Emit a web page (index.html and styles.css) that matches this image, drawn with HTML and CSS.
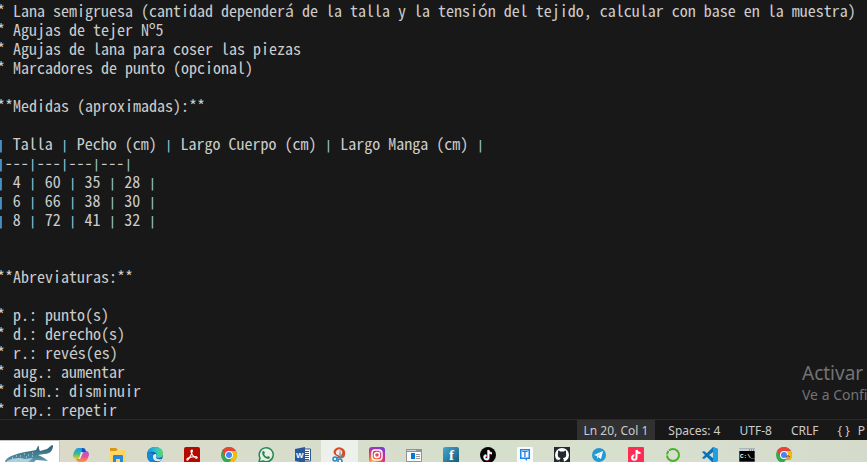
FILE: index.html
```html
<!DOCTYPE html>
<html lang="es">
<head>
<meta charset="utf-8">
<title>Editor</title>
<link rel="stylesheet" href="styles.css">
</head>
<body>
<main class="editor">
<pre class="code">* Lana semigruesa (cantidad dependerá de la talla y la tensión del tejido, calcular con base en la muestra)
* Agujas de tejer Nº5
* Agujas de lana para coser las piezas
* Marcadores de punto (opcional)

**Medidas (aproximadas):**

<i>|</i> Talla <i>|</i> Pecho (cm) <i>|</i> Largo Cuerpo (cm) <i>|</i> Largo Manga (cm) <i>|</i>
<i>|</i>---<i>|</i>---<i>|</i>---<i>|</i>---<i>|</i>
<i>|</i> 4 <i>|</i> 60 <i>|</i> 35 <i>|</i> 28 <i>|</i>
<i>|</i> 6 <i>|</i> 66 <i>|</i> 38 <i>|</i> 30 <i>|</i>
<i>|</i> 8 <i>|</i> 72 <i>|</i> 41 <i>|</i> 32 <i>|</i>


**Abreviaturas:**

* p.: punto(s)
* d.: derecho(s)
* r.: revés(es)
* aug.: aumentar
* dism.: disminuir
* rep.: repetir</pre>
<aside class="watermark"><p class="mark-title">Activar</p><p class="mark-text">Ve a Confi</p></aside>
</main>
<footer class="status">
<button class="item current">Ln 20, Col 1</button>
<button class="item">Spaces: 4</button>
<button class="item">UTF-8</button>
<button class="item">CRLF</button>
<button class="item language"><span>{ }</span><span>P</span></button>
</footer>
<nav class="taskbar">
<button class="search">
<svg width="59" height="30" viewBox="0 0 59 30"><defs><linearGradient id="sk" x2="0" y2="1"><stop offset="0" stop-color="#28616f"/><stop offset=".6" stop-color="#4f8ba1"/><stop offset="1" stop-color="#9cc0cd"/></linearGradient></defs><path d="M5 20C8 15 16 13 25 11C29 10 33 10 36 9L38 5Q39 4 39 8L40 10L47 8L52 4Q54 4 52 9Q50 13 44 13L38 14Q45 17 48 20L36 19L30 26H5Z" fill="url(#sk)"/><path d="M7 20Q16 15 25 18L33 17L26 23H7Z" fill="#acd0df"/><path d="M12 17h1m3-2h1m3 0h1m3-2h1m3 1h1m3-2h1M20 18h1m5-2h1m5-1h1" stroke="#c9e3e8"/></svg>
</button>
<button class="app"><svg viewBox="0 0 16 16"><defs><linearGradient id="ca" x2="0" y2="1"><stop stop-color="#169cec"/><stop offset=".5" stop-color="#38b991"/><stop offset="1" stop-color="#ecd022"/></linearGradient><linearGradient id="cb" x2="0" y2="1"><stop stop-color="#a553eb"/><stop offset=".55" stop-color="#ef5288"/><stop offset="1" stop-color="#ff9c3d"/></linearGradient></defs><path d="M5 1h5q2 0 2.500 2l.5 2H9L6.500 12H3Q0 12 0 8Q2 1 5 1Z" fill="url(#ca)"/><path d="M11 4h2q3 0 3 4q-2 7-5 7H6q-2 0-3-3h4z" fill="url(#cb)"/><path d="M9 1q3 0 3.500 2l.5 2H10Q9 5 8 8z" fill="#174fc5"/><path d="M9.500 5L7 12H6l2-7Z" fill="#e9f0f5"/></svg></button>
<button class="app"><svg viewBox="0 0 16 16"><path d="M0 1h6l2 2v3H0z" fill="#d99610"/><path d="M0 4h6l1-1h9v13H0z" fill="#ffd664"/><path d="M3 16V9q0-1 1-1h8q1 0 1 1v7h-3v-4H6v4z" fill="#2689dc"/></svg></button>
<button class="app"><svg viewBox="0 0 16 16"><defs><linearGradient id="eg" x2="1" y2="0"><stop stop-color="#168dd6"/><stop offset=".55" stop-color="#2bc4cb"/><stop offset="1" stop-color="#60d761"/></linearGradient></defs><circle cx="8" cy="8" r="8" fill="#1265b8"/><path d="M0 7Q1 0 8 0q8 0 8 7q0 4-5 4q-2 0-2-1q2-4-2-5Q3 4 0 7Z" fill="url(#eg)"/><path d="M9 7q-4 0-3 4q1 4 7 3l2-2q-6 1-6-2q1-2 0-3" fill="#dceced"/><path d="M6 7q-2 6 4 9H8Q0 16 0 8q2-4 6-1" fill="#148ad5"/></svg></button>
<button class="app"><svg viewBox="0 0 16 16"><rect width="16" height="16" rx="2" fill="#b30b00"/><path d="M8 3q-2 0 0 4q3 5 5 4q1-2-5-1q-6 1-5 3q1 1 4-5q2-5 1-5Z" fill="none" stroke="#fff" stroke-width="1.200"/></svg></button>
<button class="app"><svg viewBox="0 0 16 16"><g id="chrome"><circle cx="8" cy="8" r="8" fill="#35a853"/><path d="M1.100 4A8 8 0 0 1 14.900 4H8A4 4 0 0 0 4.500 10Z" fill="#e94335"/><path d="M14.900 4A8 8 0 0 1 8 16l3.500-6A4 4 0 0 0 8 4Z" fill="#fbbc05"/><circle cx="8" cy="8" r="4" fill="#fff"/><circle cx="8" cy="8" r="3" fill="#4285f4"/></g></svg></button>
<button class="app"><svg viewBox="0 0 16 16"><path d="M1 15l1-4A7 7 0 1 1 5 14Z" fill="#e8eee0" stroke="#238857" stroke-width="1.500"/><path d="M5 4l1 0l1 2l-1 1q1 2 3 3l1-1l2 1q0 2-2 2Q5 11 4 6Z" fill="#238857"/></svg></button>
<button class="app"><svg viewBox="0 0 16 16"><path d="M8 2h7.500v12H8z" fill="#fff" stroke="#2b579a"/><path d="M10 4.500h4m-4 2h4m-4 2h4m-4 2h4m-4 2h4" stroke="#2b579a"/><path d="M0 2l10-2v16L0 14z" fill="#2b579a"/><text x="1" y="11" class="glyph word">W</text></svg></button>
<button class="app active"><svg viewBox="0 0 16 16"><path d="M3 2Q6-1 10 1Q14 3 13 8Q12 12 8 11L3 8Q0 5 3 2Z" fill="#d84a25"/><path d="M5 3Q8 1 10 4Q11 7 8 9L4 7Q3 5 5 3Z" fill="#ecebea"/><path d="M8 1l2 11l-3-4Z" fill="#9fa6aa"/><path d="M12 8l-2 2l-6 1" fill="none" stroke="#6e7d85" stroke-width="1.500"/><circle cx="3" cy="12" r="2" fill="none" stroke="#2a87c6" stroke-width="1.500"/><circle cx="8" cy="14" r="2" fill="none" stroke="#2a87c6" stroke-width="1.500"/></svg></button>
<button class="app"><svg viewBox="0 0 16 16"><defs><radialGradient id="ig" cx=".25" cy="1" r="1.100"><stop stop-color="#ffd75b"/><stop offset=".35" stop-color="#fa6531"/><stop offset=".65" stop-color="#d92e82"/><stop offset="1" stop-color="#743ddb"/></radialGradient></defs><rect width="16" height="16" rx="3" fill="url(#ig)"/><rect x="3" y="3" width="10" height="10" rx="3" fill="none" stroke="#fff" stroke-width="1.400"/><circle cx="8" cy="8" r="2.500" fill="none" stroke="#fff" stroke-width="1.400"/><circle cx="11" cy="5" r=".8" fill="#fff"/></svg></button>
<button class="app"><svg viewBox="0 0 16 16"><path d="M.5 2.500h15v12H.5z" fill="#fafafa" stroke="#8f9499"/><path d="M0 2h16v3H0z" fill="#8f9499"/><path d="M1 3h9v1H1z" fill="#cfd1d2"/><path d="M5 6h4v6H5z" fill="#0078d7"/><path d="M10 7.500h4m-4 2h4m-4 2h4" stroke="#999"/></svg></button>
<button class="app"><svg viewBox="0 0 16 16"><defs><linearGradient id="fb" x2="1" y2="1"><stop stop-color="#46a8cf"/><stop offset="1" stop-color="#165879"/></linearGradient></defs><rect width="16" height="16" rx="2" fill="url(#fb)"/><text x="6" y="13" class="glyph letter-f">f</text></svg></button>
<button class="app"><svg viewBox="0 0 16 16"><circle cx="8" cy="8" r="8" fill="#050505"/><path d="M8 3v7a2 2 0 1 1-2-2M8 3q1 3 4 3" fill="none" stroke="#32dcda" stroke-width="1.800"/><path d="M9 4v7a2 2 0 1 1-2-2M9 4q1 3 3 3" fill="none" stroke="#ed2957" stroke-width="1.600"/><path d="M8.500 3v7.500a2 2 0 1 1-2-2M8.500 3q0 3 3.500 3.500" fill="none" stroke="#fff" stroke-width="1.500"/></svg></button>
<button class="app"><svg viewBox="0 0 16 16"><rect width="16" height="16" rx="1" fill="#f7fbff"/><path d="M3 2h10v10h-3v2l-2-2H3z" fill="#1785f2"/><path d="M4.500 3.500h7v7h-7z" fill="#f7fbff"/><text x="5" y="10" class="glyph letter-t">T</text></svg></button>
<button class="app"><svg viewBox="0 0 16 16"><rect width="16" height="16" fill="#24292e"/><circle cx="8" cy="8" r="7" fill="#fff"/><path d="M4 4q1-1 2 .5h4Q11 3 12 4v2q1 5-3 5q1 1 1 5H6v-2q-2 1-3-2q2 2 3 0q0-1 1-1q-4 0-3-5Z" fill="#24292e"/></svg></button>
<button class="app"><svg viewBox="0 0 16 16"><circle cx="8" cy="8" r="7" fill="#2498d2"/><path d="M3 8l9-4L10 12L7 10L6 12L6 9Z" fill="#fff"/><path d="M6 9l5-4l-4 5z" fill="#b2d6e9"/></svg></button>
<button class="app"><svg viewBox="0 0 16 16"><rect width="16" height="16" rx="1" fill="#fe2b55"/><path d="M8.500 3v7.500a2.200 2.200 0 1 1-2.200-2.200M8.500 3q.5 3 4 3" fill="none" stroke="#fff" stroke-width="2"/></svg></button>
<button class="app"><svg viewBox="0 0 16 16"><circle cx="8" cy="8" r="6" fill="none" stroke="#44b02a" stroke-width="2"/><circle cx="8" cy="8" r="6.500" fill="none" stroke="#75bd54" stroke-dasharray="1 2"/><path d="M3 3l2 2m-4 3h2" stroke="#d8dfcf"/></svg></button>
<button class="app"><svg viewBox="0 0 16 16"><path d="M11 0l5 2v12l-5 2L1 6l-1-1l2-1l9 7V5L2 12L0 11l1-1z" fill="#0873bd"/><path d="M11 0l5 2v12l-5 2z" fill="#209fe4"/></svg></button>
<button class="app"><svg viewBox="0 0 16 16"><path d="M0 2h16v13H0z" fill="#000" stroke="#858c98"/><path d="M0 2h16v2H0z" fill="#c8ced8"/><path d="M10 3h1m1 0h1m1 0h1" stroke="#48576d"/><text x="1" y="11" class="glyph prompt">C:\_</text></svg></button>
<button class="app"><svg viewBox="0 0 16 16"><use href="#chrome"/><circle cx="12" cy="11" r="2" fill="#c69b87"/><path d="M8 16q0-3 4-3t4 3z" fill="#e2dedb"/><path d="M10 10q2-3 4 0" fill="none" stroke="#6c4c40"/></svg></button>
</nav>
</body>
</html>
```
FILE: styles.css
```css
* { box-sizing: border-box; }

body {
  display: flex;
  flex-direction: column;
  height: 100vh;
  margin: 0;
  overflow: hidden;
  background: #181818;
  color: #cccccc;
  font-family: "Noto Sans", sans-serif;
}

button {
  margin: 0;
  padding: 0;
  border: 0;
  background: none;
  color: inherit;
  font: inherit;
  text-align: left;
}

.editor {
  position: relative;
  flex: 1;
  min-height: 0;
  padding-top: 1px;
  overflow: hidden;
}

.code {
  margin: 0 0 0 -3px;
  font-family: "Noto Sans Mono CJK SC", "DejaVu Sans Mono", monospace;
  font-size: 16px;
  line-height: 19px;
}

.code i {
  color: #9cc8e0;
  font-family: "DejaVu Sans Mono", monospace;
  font-size: 13px;
  font-style: normal;
  line-height: 1;
}

.watermark {
  position: absolute;
  right: 0;
  bottom: 14px;
  width: 65px;
  overflow: hidden;
  color: #737373;
  white-space: nowrap;
}

.watermark p { margin: 0; }

.mark-title {
  font-size: 19px;
  line-height: 24px;
}

.mark-text {
  font-size: 14px;
  line-height: 20px;
}

.status {
  display: flex;
  flex: none;
  justify-content: flex-end;
  height: 21px;
  border-top: 1px solid #2b2b2b;
  overflow: hidden;
  font-size: 12px;
  line-height: 22px;
  white-space: nowrap;
}

.item {
  flex: none;
  height: 22px;
  padding: 0 10px 0 9px;
}

.current {
  margin-right: 4px;
  padding: 0 7px;
  background: #313131;
}

.language {
  display: flex;
  gap: 8px;
  padding-right: 2px;
}

.taskbar {
  display: flex;
  flex: none;
  align-items: flex-start;
  height: 22px;
  overflow: hidden;
  background: linear-gradient(90deg, #dcd9c8, #d9dccb 25%, #d6dfcb 50%, #d8dfce 75%, #d5dbca);
}

.search {
  flex: none;
  width: 60px;
  height: 30px;
  margin-right: 2px;
  border: 1px solid #c6c6c0;
  border-left: 0;
  background: #ffffff;
}

.search svg { display: block; }

.app {
  display: flex;
  flex: none;
  justify-content: center;
  width: 37px;
  height: 30px;
  padding-top: 7px;
}

.app svg {
  width: 16px;
  height: 16px;
}

.active { background: #eef0ec; }

.glyph {
  fill: #ffffff;
  font-family: "Liberation Sans", sans-serif;
  font-weight: bold;
}

.word { font-size: 8px; }

.letter-f {
  font-family: "Liberation Serif", serif;
  font-size: 15px;
}

.letter-t {
  fill: #1785f2;
  font-size: 9px;
}

.prompt {
  font-family: "Liberation Mono", monospace;
  font-size: 6px;
}
```
